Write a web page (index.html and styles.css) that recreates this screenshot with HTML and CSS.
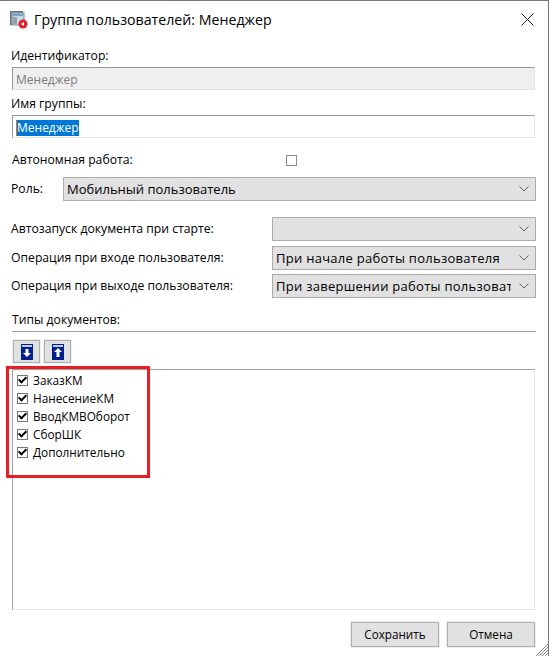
FILE: index.html
```html
<!DOCTYPE html>
<html lang="ru">
<head>
  <meta charset="utf-8">
  <title>Группа пользователей: Менеджер</title>
  <link rel="stylesheet" href="styles.css">
</head>
<body>
  <div class="window">
    <div class="titlebar">
      <svg class="app-icon" width="18" height="18" viewBox="0 0 18 18">
        <rect x="0.5" y="0.5" width="12" height="13" fill="#8d98a3" stroke="#6c7178"/>
        <rect x="2" y="2" width="12" height="12" fill="#c4d8e8" stroke="#7f8a94"/>
        <rect x="3" y="3" width="10" height="2" fill="#6aa6d6"/>
        <rect x="3" y="6" width="4" height="7" fill="#9a9fa5"/>
        <circle cx="13" cy="13" r="4.5" fill="#e0242c"/>
        <path d="M11 13l3-2v4z" fill="#fff"/>
      </svg>
      <span class="title-text">Группа пользователей: Менеджер</span>
      <svg class="close-icon" width="13" height="13" viewBox="0 0 13 13">
        <path d="M0.5 0.5l12 12M12.5 0.5l-12 12" stroke="#222" stroke-width="1" fill="none"/>
      </svg>
    </div>

    <div class="form">
      <div class="label label-id">Идентификатор:</div>
      <div class="input input-disabled">Менеджер</div>
      <div class="label label-name">Имя группы:</div>
      <div class="input"><span class="selected">Менеджер</span></div>

      <div class="row row-check">
        <span class="check-label">Автономная работа:</span>
        <span class="check-empty"></span>
      </div>

      <div class="row row-role">
        <span class="role-label">Роль:</span>
        <div class="select select-role">
          <span class="select-text">Мобильный пользователь</span>
          <svg class="chev" width="10" height="6" viewBox="0 0 10 6"><path d="M0.5 0.5L5 5l4.500-4.500" fill="none" stroke="#666"/></svg>
        </div>
      </div>

      <div class="row row-op row-first">
        <span class="op-label">Автозапуск документа при старте:</span>
        <div class="select select-op">
          <span class="select-text"></span>
          <svg class="chev" width="10" height="6" viewBox="0 0 10 6"><path d="M0.5 0.5L5 5l4.500-4.500" fill="none" stroke="#666"/></svg>
        </div>
      </div>
      <div class="row row-op">
        <span class="op-label">Операция при входе пользователя:</span>
        <div class="select select-op">
          <span class="select-text">При начале работы пользователя</span>
          <svg class="chev" width="10" height="6" viewBox="0 0 10 6"><path d="M0.5 0.5L5 5l4.500-4.500" fill="none" stroke="#666"/></svg>
        </div>
      </div>
      <div class="row row-op">
        <span class="op-label">Операция при выходе пользователя:</span>
        <div class="select select-op">
          <span class="select-text">При завершении работы пользователя</span>
          <svg class="chev" width="10" height="6" viewBox="0 0 10 6"><path d="M0.5 0.5L5 5l4.500-4.500" fill="none" stroke="#666"/></svg>
        </div>
      </div>

      <div class="label label-types">Типы документов:</div>
      <div class="toolbar">
        <div class="tool-btn">
          <svg width="12" height="16" viewBox="0 0 12 16">
            <rect width="12" height="16" fill="#00208c"/>
            <rect x="1" y="1" width="10" height="2" fill="#b8cdf0"/>
            <path d="M4.500 5h3v4H10l-4 4-4-4h2.500z" fill="#fff"/>
          </svg>
        </div>
        <div class="tool-btn">
          <svg width="12" height="16" viewBox="0 0 12 16">
            <rect width="12" height="16" fill="#00208c"/>
            <rect x="1" y="1" width="10" height="2" fill="#b8cdf0"/>
            <path d="M6 4l4 4H7.500v5h-3V8H2z" fill="#fff"/>
          </svg>
        </div>
      </div>

      <div class="list">
        <div class="list-row"><span class="box"></span>ЗаказКМ</div>
        <div class="list-row"><span class="box"></span>НанесениеКМ</div>
        <div class="list-row"><span class="box"></span>ВводКМВОборот</div>
        <div class="list-row"><span class="box"></span>СборШК</div>
        <div class="list-row"><span class="box"></span>Дополнительно</div>
      </div>
      <div class="highlight"></div>

      <div class="footer">
        <div class="btn">Сохранить</div>
        <div class="btn">Отмена</div>
      </div>
    </div>
    <svg class="grip" width="12" height="12" viewBox="0 0 12 12">
      <path d="M12 0L0 12M12 3L3 12M12 6L6 12M12 9L9 12" stroke="#8a8a8a" fill="none"/>
    </svg>
  </div>
</body>
</html>
```

FILE: styles.css
```css
html, body {
    margin: 0;
    padding: 0;
    height: 100%;
}

body {
    background: #fff;
    color: #000;
    font-family: "Open Sans", "Noto Sans", sans-serif;
    font-size: 12.2px;
    line-height: 16px;
}

.window {
    position: relative;
    box-sizing: border-box;
    width: 549px;
    height: 656px;
    border-top: 1px solid #777;
    border-right: 1px solid #777;
    overflow: hidden;
}

.titlebar {
    display: flex;
    align-items: center;
    height: 37px;
    padding-left: 10px;
}

.app-icon {
    margin-right: 6px;
}

.title-text {
    font-size: 14.2px;
    flex: 1;
}

.close-icon {
    margin-right: 14px;
}

.form {
    position: relative;
    padding: 10px 12px 0;
    width: 524px;
}

.label {
    height: 16px;
    margin-left: -1px;
}

.label-id {
    margin-bottom: 3px;
}

.label-name {
    margin-top: 6px;
    margin-bottom: 3px;
}

.input {
    box-sizing: border-box;
    height: 23px;
    margin-right: 1px;
    border: 1px solid #e3e3e3;
    border-top: 1px solid #999;
    border-left: 1px solid #999;
    padding: 4px 3px 0;
    font-size: 12px;
    line-height: 16px;
}

.input-disabled {
    background: #efefef;
    color: #7d7d7d;
}

.selected {
    background: #0078d7;
    color: #fff;
    display: inline-block;
    border-left: 1px solid #e0701e;
}

.row {
    display: flex;
    align-items: center;
}

.row-check {
    margin-top: 14px;
    height: 16px;
}

.check-label {
    width: 274px;
}

.check-empty {
    box-sizing: border-box;
    width: 11px;
    height: 11px;
    border: 1px solid #8a8a8a;
    background: #fff;
}

.row-role {
    margin-top: 9px;
}

.role-label {
    width: 52px;
    margin-left: -1px;
}

.select {
    box-sizing: border-box;
    display: flex;
    align-items: center;
    height: 24px;
    background: #e1e1e1;
    border: 1px solid #adadad;
    padding: 0 6px 0 3px;
    font-size: 13px;
}

.select-role {
    width: 473px;
}

.select-op {
    width: 264px;
    letter-spacing: 0.27px;
}

.select-text {
    flex: 1;
    overflow: hidden;
    white-space: nowrap;
    margin-right: 8px;
}

.row-op {
    margin-top: 5px;
    justify-content: space-between;
}

.row-op + .row-op + .row-op {
    margin-top: 4px;
}

.row-first {
    margin-top: 16px;
}

.op-label {
    margin-left: -1px;
}

.label-types {
    margin-top: 14px;
    margin-left: 0;
    padding-bottom: 3px;
    height: 16px;
    border-bottom: 1px solid #a0a0a0;
}

.toolbar {
    display: flex;
    gap: 4px;
    margin-top: 8px;
    padding-left: 1px;
}

.tool-btn {
    box-sizing: border-box;
    width: 27px;
    height: 23px;
    display: flex;
    align-items: center;
    justify-content: center;
    background: #e1e1e1;
    border: 1px solid #adadad;
    box-shadow: 0 0 0 1px #f0f0f0;
}

.list {
    box-sizing: border-box;
    margin-top: 6px;
    margin-right: 1px;
    height: 241px;
    border: 1px solid #e3e3e3;
    border-top: 1px solid #a0a0a0;
    border-left: 1px solid #a0a0a0;
    padding-top: 1px;
    padding-left: 4px;
    font-size: 11.8px;
}

.list-row {
    display: flex;
    align-items: center;
    height: 18px;
}

.box {
    box-sizing: border-box;
    position: relative;
    width: 11px;
    height: 11px;
    border: 1px solid #777;
    margin-right: 5px;
    background: #fff;
}

.box::after {
    content: "";
    position: absolute;
    left: 2px;
    top: -1px;
    width: 3px;
    height: 6px;
    border-right: 2px solid #000;
    border-bottom: 2px solid #000;
    transform: rotate(45deg);
}

.highlight {
    position: absolute;
    box-sizing: border-box;
    left: 6px;
    top: 328px;
    width: 144px;
    height: 112px;
    border: 3px solid #ed1c24;
}

.footer {
    display: flex;
    justify-content: flex-end;
    gap: 8px;
    margin-top: 12px;
    padding-right: 1px;
    font-size: 11.7px;
}

.btn {
    box-sizing: border-box;
    width: 88px;
    height: 25px;
    background: #e1e1e1;
    border: 1px solid #adadad;
    box-shadow: 0 0 0 1px #f0f0f0;
    text-align: center;
    line-height: 23px;
}

.grip {
    position: absolute;
    right: 0;
    bottom: 0;
}
```
